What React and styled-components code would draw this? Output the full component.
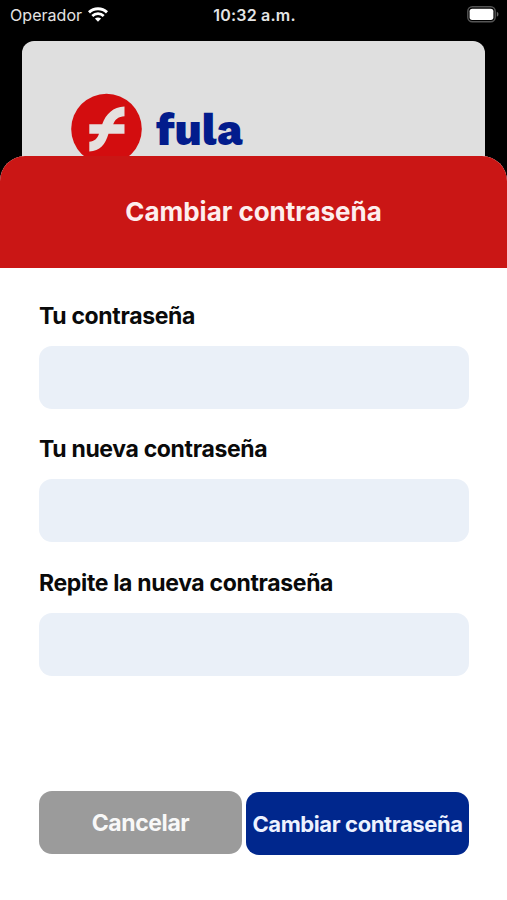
import React from "react";
import styled, { createGlobalStyle } from "styled-components";

const GlobalStyle = createGlobalStyle`
  * {
    box-sizing: border-box;
  }

  body {
    margin: 0;
    background: #000;
    font-family: Inter, "Liberation Sans", sans-serif;
  }
`;

const Screen = styled.div`
  width: 507px;
  height: 900px;
  display: flex;
  flex-direction: column;
  overflow: hidden;
  background: #000;
`;

const StatusBar = styled.header`
  flex: none;
  height: 41px;
  padding: 0 8px 12px 10px;
  display: grid;
  grid-template-columns: 1fr auto 1fr;
  align-items: center;
  color: #e4e4e4;
`;

const Carrier = styled.div`
  display: flex;
  align-items: center;
  gap: 6px;
  font-size: 16px;
  letter-spacing: 0.05px;
  line-height: 20px;
`;

const Clock = styled.div`
  font-size: 16px;
  font-weight: 600;
  letter-spacing: 0.2px;
  line-height: 20px;
`;

const Battery = styled.svg`
  justify-self: end;
  margin-top: -1px;
`;

const BackCard = styled.div`
  flex: none;
  height: 145px;
  margin: 0 22px;
  padding: 52px 0 0 49px;
  display: flex;
  align-items: flex-start;
  gap: 14px;
  border-radius: 12px 12px 0 0;
  background: #dfdfdf;
`;

const Brand = styled.span`
  margin-top: 12px;
  color: #021c8c;
  font-family: "Work Sans", Inter, sans-serif;
  font-size: 44px;
  font-weight: 800;
  line-height: 50px;
`;

const Sheet = styled.main`
  flex: 1;
  margin-top: -30px;
  z-index: 1;
  display: flex;
  flex-direction: column;
  border-radius: 25px 25px 0 0;
  overflow: hidden;
  background: #fff;
`;

const SheetHeader = styled.div`
  flex: none;
  height: 112px;
  display: flex;
  align-items: center;
  justify-content: center;
  background: #ca1615;
`;

const Title = styled.h1`
  margin: 0;
  color: #fdeeee;
  font-size: 26px;
  font-weight: 700;
  letter-spacing: -0.03px;
  line-height: 32px;
  white-space: nowrap;
`;

const Form = styled.form`
  flex: 1;
  padding: 33px 38px 45px 39px;
  display: flex;
  flex-direction: column;
`;

const Field = styled.label`
  height: 133.4px;
  display: flex;
  flex-direction: column;
  gap: 15px;
`;

const Label = styled.span`
  color: #0a0a0a;
  font-size: 23px;
  font-weight: 700;
  letter-spacing: -0.34px;
  line-height: 30px;
  white-space: nowrap;
`;

const Input = styled.input`
  width: 100%;
  height: 63px;
  padding: 0 16px;
  border: 0;
  border-radius: 13px;
  outline: 0;
  background: #eaf0f8;
  font: inherit;
  font-size: 22px;
`;

const Actions = styled.div`
  margin-top: auto;
  display: flex;
  gap: 4px;
`;

const Button = styled.button`
  width: ${({ $width }) => $width}px;
  height: 63px;
  margin: ${({ $primary }) => ($primary ? "1px 0 0" : "0 0 1px")};
  padding: 0;
  border: 0;
  border-radius: 13px;
  background: ${({ $primary }) => ($primary ? "#00278d" : "#9b9b9b")};
  color: ${({ $primary }) => ($primary ? "#edf2ff" : "#f8f8f8")};
  font: inherit;
  font-size: ${({ $primary }) => ($primary ? 22 : 23)}px;
  font-weight: 700;
  letter-spacing: -0.4px;
  white-space: nowrap;
`;

const WifiIcon = () => (
  <svg width="20" height="15" viewBox="0 0 20 15" fill="none" stroke="#fff">
    <path d="M1 5.4C6 .6 14 .6 19 5.4" strokeWidth="2.9" />
    <path d="M4.3 8.9c3.2-3 8.2-3 11.4 0" strokeWidth="2.8" />
    <path d="M10 14.8 6.9 11.6c1.8-1.6 4.4-1.6 6.2 0z" fill="#fff" stroke="none" />
  </svg>
);

const FulaLogo = () => (
  <svg width="71" height="71" viewBox="0 0 71 71">
    <circle cx="35.5" cy="36" r="35.3" fill="#d30d0f" />
    <path
      fill="#e5e0df"
      d="M53.5 13.5v9.7c-6 .3-9.2 2.7-11.3 8h11.3v9.5H37.5c-3.2 10.6-8.4 17.3-19.2 17.8v-9.8c5.2-.5 8-3 9.7-8h-9.7v-9.5h12.9C35.1 20.8 42 14 53.5 13.5z"
    />
  </svg>
);

const fields = ["Tu contraseña", "Tu nueva contraseña", "Repite la nueva contraseña"];

const App = () => (
  <Screen>
    <GlobalStyle />
    <StatusBar>
      <Carrier>
        Operador
        <WifiIcon />
      </Carrier>
      <Clock>10:32 a.m.</Clock>
      <Battery width="32" height="17" viewBox="0 0 32 17">
        <rect x=".8" y=".8" width="27.4" height="15" rx="4.5" fill="none" stroke="#555" strokeWidth="1.4" />
        <rect x="2.6" y="2.7" width="23.8" height="11.2" rx="2.6" fill="#fff" />
        <path d="M29.8 5.8c2.2.7 2.2 4.3 0 5z" fill="#666" />
      </Battery>
    </StatusBar>
    <BackCard>
      <FulaLogo />
      <Brand>fula</Brand>
    </BackCard>
    <Sheet>
      <SheetHeader>
        <Title>Cambiar contraseña</Title>
      </SheetHeader>
      <Form>
        {fields.map(label => (
          <Field key={label}>
            <Label>{label}</Label>
            <Input type="password" />
          </Field>
        ))}
        <Actions>
          <Button type="button" $width={203}>
            Cancelar
          </Button>
          <Button type="button" $primary $width={223}>
            Cambiar contraseña
          </Button>
        </Actions>
      </Form>
    </Sheet>
  </Screen>
);

export default App;
